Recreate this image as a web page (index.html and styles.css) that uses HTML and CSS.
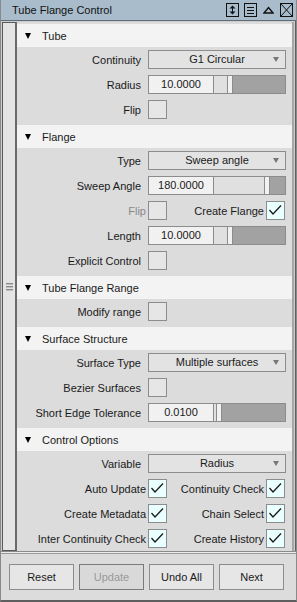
FILE: index.html
```html
<!DOCTYPE html>
<html lang="en">
<head>
    <meta charset="UTF-8">
    <meta name="viewport" content="width=device-width, initial-scale=1.0">
    <title>Tube Flange Control</title>
    <link rel="stylesheet" href="styles.css">
</head>
<body>
    <div class="window">
        <div class="titlebar">
            <span class="title">Tube Flange Control</span>
            <div class="title-icons">
                <svg width="13" height="14" viewBox="0 0 13 14">
                    <rect x="0.5" y="0.5" width="12" height="13" fill="none" stroke="#111"/>
                    <line x1="6.5" y1="4" x2="6.5" y2="10" stroke="#111"/>
                    <polygon points="3.5,5.5 9.5,5.5 6.5,2.5" fill="#111"/>
                    <polygon points="3.5,8.5 9.5,8.5 6.5,11.5" fill="#111"/>
                </svg>
                <svg width="13" height="14" viewBox="0 0 13 14">
                    <rect x="0.5" y="0.5" width="12" height="13" fill="none" stroke="#111"/>
                    <line x1="3" y1="4.5" x2="10" y2="4.5" stroke="#111"/>
                    <line x1="3" y1="7.5" x2="10" y2="7.5" stroke="#111"/>
                    <line x1="3" y1="10.5" x2="10" y2="10.5" stroke="#111"/>
                </svg>
                <svg class="collapse" width="11" height="10" viewBox="0 0 11 10">
                    <polygon points="1,8 5.5,2.5 10,8" fill="none" stroke="#111" stroke-width="1.4"/>
                </svg>
                <svg width="13" height="14" viewBox="0 0 13 14">
                    <rect x="0.5" y="0.5" width="12" height="13" fill="none" stroke="#111"/>
                    <line x1="1" y1="1" x2="12" y2="13" stroke="#111"/>
                    <line x1="12" y1="1" x2="1" y2="13" stroke="#111"/>
                </svg>
            </div>
        </div>

        <div class="main">
            <div class="strip">
                <svg width="7" height="8" viewBox="0 0 7 8">
                    <rect x="0" y="0" width="7" height="1.4" fill="#8a8a8a"/>
                    <rect x="0" y="3" width="7" height="1.4" fill="#8a8a8a"/>
                    <rect x="0" y="6" width="7" height="1.4" fill="#8a8a8a"/>
                </svg>
            </div>

            <div class="panel">
                <!-- Tube -->
                <div class="section-header"><span class="arrow"></span>Tube</div>
                <div class="section-body">
                    <div class="row">
                        <label>Continuity</label>
                        <div class="dropdown">G1 Circular<span class="drop-arrow"></span></div>
                    </div>
                    <div class="row">
                        <label>Radius</label>
                        <div class="slider">
                            <div class="field">10.0000</div>
                            <div class="track">
                                <div class="track-light" style="width: 13px"></div>
                                <div class="thumb"></div>
                                <div class="track-fill"></div>
                            </div>
                        </div>
                    </div>
                    <div class="row">
                        <label>Flip</label>
                        <div class="checkbox"></div>
                    </div>
                </div>

                <!-- Flange -->
                <div class="section-header"><span class="arrow"></span>Flange</div>
                <div class="section-body">
                    <div class="row">
                        <label>Type</label>
                        <div class="dropdown">Sweep angle<span class="drop-arrow"></span></div>
                    </div>
                    <div class="row">
                        <label>Sweep Angle</label>
                        <div class="slider">
                            <div class="field">180.0000</div>
                            <div class="track">
                                <div class="track-light" style="width: 50px"></div>
                                <div class="thumb"></div>
                                <div class="track-fill"></div>
                            </div>
                        </div>
                    </div>
                    <div class="row-pair">
                        <label class="disabled">Flip</label>
                        <div class="checkbox"></div>
                        <label>Create Flange</label>
                        <div class="checkbox checked"><svg width="17" height="17" viewBox="0 0 17 17"><path d="M2.5 8 L6 12 L14 3.5" fill="none" stroke="#1a1a1a" stroke-width="1.3"/></svg></div>
                    </div>
                    <div class="row">
                        <label>Length</label>
                        <div class="slider">
                            <div class="field">10.0000</div>
                            <div class="track">
                                <div class="track-light" style="width: 13px"></div>
                                <div class="thumb"></div>
                                <div class="track-fill"></div>
                            </div>
                        </div>
                    </div>
                    <div class="row">
                        <label>Explicit Control</label>
                        <div class="checkbox"></div>
                    </div>
                </div>

                <!-- Tube Flange Range -->
                <div class="section-header"><span class="arrow"></span>Tube Flange Range</div>
                <div class="section-body">
                    <div class="row">
                        <label>Modify range</label>
                        <div class="checkbox"></div>
                    </div>
                </div>

                <!-- Surface Structure -->
                <div class="section-header"><span class="arrow"></span>Surface Structure</div>
                <div class="section-body">
                    <div class="row">
                        <label>Surface Type</label>
                        <div class="dropdown">Multiple surfaces<span class="drop-arrow"></span></div>
                    </div>
                    <div class="row">
                        <label>Bezier Surfaces</label>
                        <div class="checkbox"></div>
                    </div>
                    <div class="row">
                        <label>Short Edge Tolerance</label>
                        <div class="slider">
                            <div class="field">0.0100</div>
                            <div class="track">
                                <div class="track-light" style="width: 2px"></div>
                                <div class="thumb"></div>
                                <div class="track-fill"></div>
                            </div>
                        </div>
                    </div>
                </div>

                <!-- Control Options -->
                <div class="section-header"><span class="arrow"></span>Control Options</div>
                <div class="section-body">
                    <div class="row">
                        <label>Variable</label>
                        <div class="dropdown">Radius<span class="drop-arrow"></span></div>
                    </div>
                    <div class="row-pair">
                        <label>Auto Update</label>
                        <div class="checkbox checked"><svg width="17" height="17" viewBox="0 0 17 17"><path d="M2.5 8 L6 12 L14 3.5" fill="none" stroke="#1a1a1a" stroke-width="1.3"/></svg></div>
                        <label>Continuity Check</label>
                        <div class="checkbox checked"><svg width="17" height="17" viewBox="0 0 17 17"><path d="M2.5 8 L6 12 L14 3.5" fill="none" stroke="#1a1a1a" stroke-width="1.3"/></svg></div>
                    </div>
                    <div class="row-pair">
                        <label>Create Metadata</label>
                        <div class="checkbox checked"><svg width="17" height="17" viewBox="0 0 17 17"><path d="M2.5 8 L6 12 L14 3.5" fill="none" stroke="#1a1a1a" stroke-width="1.3"/></svg></div>
                        <label>Chain Select</label>
                        <div class="checkbox checked"><svg width="17" height="17" viewBox="0 0 17 17"><path d="M2.5 8 L6 12 L14 3.5" fill="none" stroke="#1a1a1a" stroke-width="1.3"/></svg></div>
                    </div>
                    <div class="row-pair">
                        <label>Inter Continuity Check</label>
                        <div class="checkbox checked"><svg width="17" height="17" viewBox="0 0 17 17"><path d="M2.5 8 L6 12 L14 3.5" fill="none" stroke="#1a1a1a" stroke-width="1.3"/></svg></div>
                        <label>Create History</label>
                        <div class="checkbox checked"><svg width="17" height="17" viewBox="0 0 17 17"><path d="M2.5 8 L6 12 L14 3.5" fill="none" stroke="#1a1a1a" stroke-width="1.3"/></svg></div>
                    </div>
                </div>
            </div>
        </div>

        <div class="separator"></div>

        <div class="footer">
            <button>Reset</button>
            <button class="disabled" disabled>Update</button>
            <button>Undo All</button>
            <button>Next</button>
        </div>
    </div>
</body>
</html>
```

FILE: styles.css
```css
/* Tool window */
body {
    margin: 0;
    font-family: "Liberation Sans", Arial, sans-serif;
    font-size: 11px;
    color: #1a1a1a;
    background: #dcdcdc;
}

.window {
    width: 297px;
    height: 602px;
    box-sizing: border-box;
    border-left: 1px solid #8a8a8a;
    border-right: 1px solid #8a8a8a;
    border-bottom: 2px solid #5e5e5e;
    background: #dcdcdc;
    display: flex;
    flex-direction: column;
}

.titlebar {
    height: 20px;
    flex: none;
    background: #a8bccb;
    border-bottom: 1px solid #5f6e7a;
    display: flex;
    align-items: center;
    padding: 0 3px 0 11px;
}

.title {
    flex: 1;
    font-size: 11px;
    color: #111;
}

.title-icons {
    display: flex;
    align-items: center;
    gap: 5px;
}

.title-icons svg {
    display: block;
}

.title-icons .collapse {
    margin: 0 1px;
}

/* Main scroll area */
.main {
    height: 530px;
    flex: none;
    display: flex;
    box-sizing: border-box;
    padding: 1px 1px 0 1px;
    background: #cdcdcd;
    border-right: 1px solid #5e5e5e;
}

.strip {
    width: 12px;
    flex: none;
    background: #e4e4e4;
    border: 1px solid #5a5a5a;
    border-right: 2px solid #6a6a6a;
    display: flex;
    align-items: center;
    justify-content: center;
}

.panel {
    flex: 1;
    overflow: hidden;
    background: #dcdcdc;
    padding-top: 2px;
    border-right: 2px solid #a6a6a6;
}

.section-header {
    height: 23px;
    background: #f3f3f3;
    display: flex;
    align-items: center;
    padding-left: 8px;
    font-size: 11px;
}

.arrow {
    width: 0;
    height: 0;
    border-left: 3px solid transparent;
    border-right: 3px solid transparent;
    border-top: 6px solid #000;
    margin-right: 11px;
}

.section-body {
    display: flex;
    flex-direction: column;
    gap: 6px;
    padding: 3px 0 6px;
}

.row {
    display: grid;
    grid-template-columns: 124px 138px;
    column-gap: 7px;
    height: 19px;
    align-items: center;
}

.row-pair {
    display: grid;
    grid-template-columns: 131px 19px 99px 19px;
    height: 19px;
    align-items: center;
}

.row-pair label {
    padding-right: 2px;
}

label {
    text-align: right;
    white-space: nowrap;
}

label.disabled {
    color: #8a8a8a;
}

/* Controls */
.dropdown {
    position: relative;
    height: 19px;
    box-sizing: border-box;
    border: 1px solid #8c8c8c;
    background: #e3e3e3;
    text-align: center;
    line-height: 17px;
}

.drop-arrow {
    position: absolute;
    right: 6px;
    top: 6px;
    width: 0;
    height: 0;
    border-left: 3px solid transparent;
    border-right: 3px solid transparent;
    border-top: 5px solid #777;
}

.slider {
    display: flex;
    height: 19px;
    box-sizing: border-box;
    border: 1px solid #8c8c8c;
}

.field {
    width: 64px;
    flex: none;
    background: #f1f1f1;
    border-right: 1px solid #8c8c8c;
    text-align: center;
    line-height: 17px;
}

.track {
    flex: 1;
    display: flex;
    background: #e0e0e0;
}

.track-light {
    flex: none;
}

.thumb {
    width: 4px;
    flex: none;
    background: #f1f1f1;
    border-left: 1px solid #8c8c8c;
    border-right: 1px solid #8c8c8c;
}

.track-fill {
    flex: 1;
    background: #a2a2a2;
}

.checkbox {
    width: 19px;
    height: 19px;
    box-sizing: border-box;
    border: 1px solid #8c8c8c;
    background: #e6e6e6;
}

.checkbox.checked {
    background: #eaffff;
}

.checkbox svg {
    display: block;
}

/* Bottom buttons */
.separator {
    height: 3px;
    flex: none;
    box-sizing: border-box;
    border-top: 1px solid #8a8a8a;
    border-bottom: 1px solid #9a9a9a;
    background: #ececec;
}

.footer {
    flex: 1;
    display: flex;
    gap: 5px;
    padding: 10px 8px 0;
}

button {
    width: 65px;
    height: 26px;
    border: 1px solid #8c8c8c;
    background: #e6e6e6;
    font-family: "Liberation Sans", Arial, sans-serif;
    font-size: 11px;
    color: #1a1a1a;
    padding: 0;
}

button.disabled {
    background: #d9d9d9;
    border-color: #7a7a7a;
    color: #9a9a9a;
}
```
